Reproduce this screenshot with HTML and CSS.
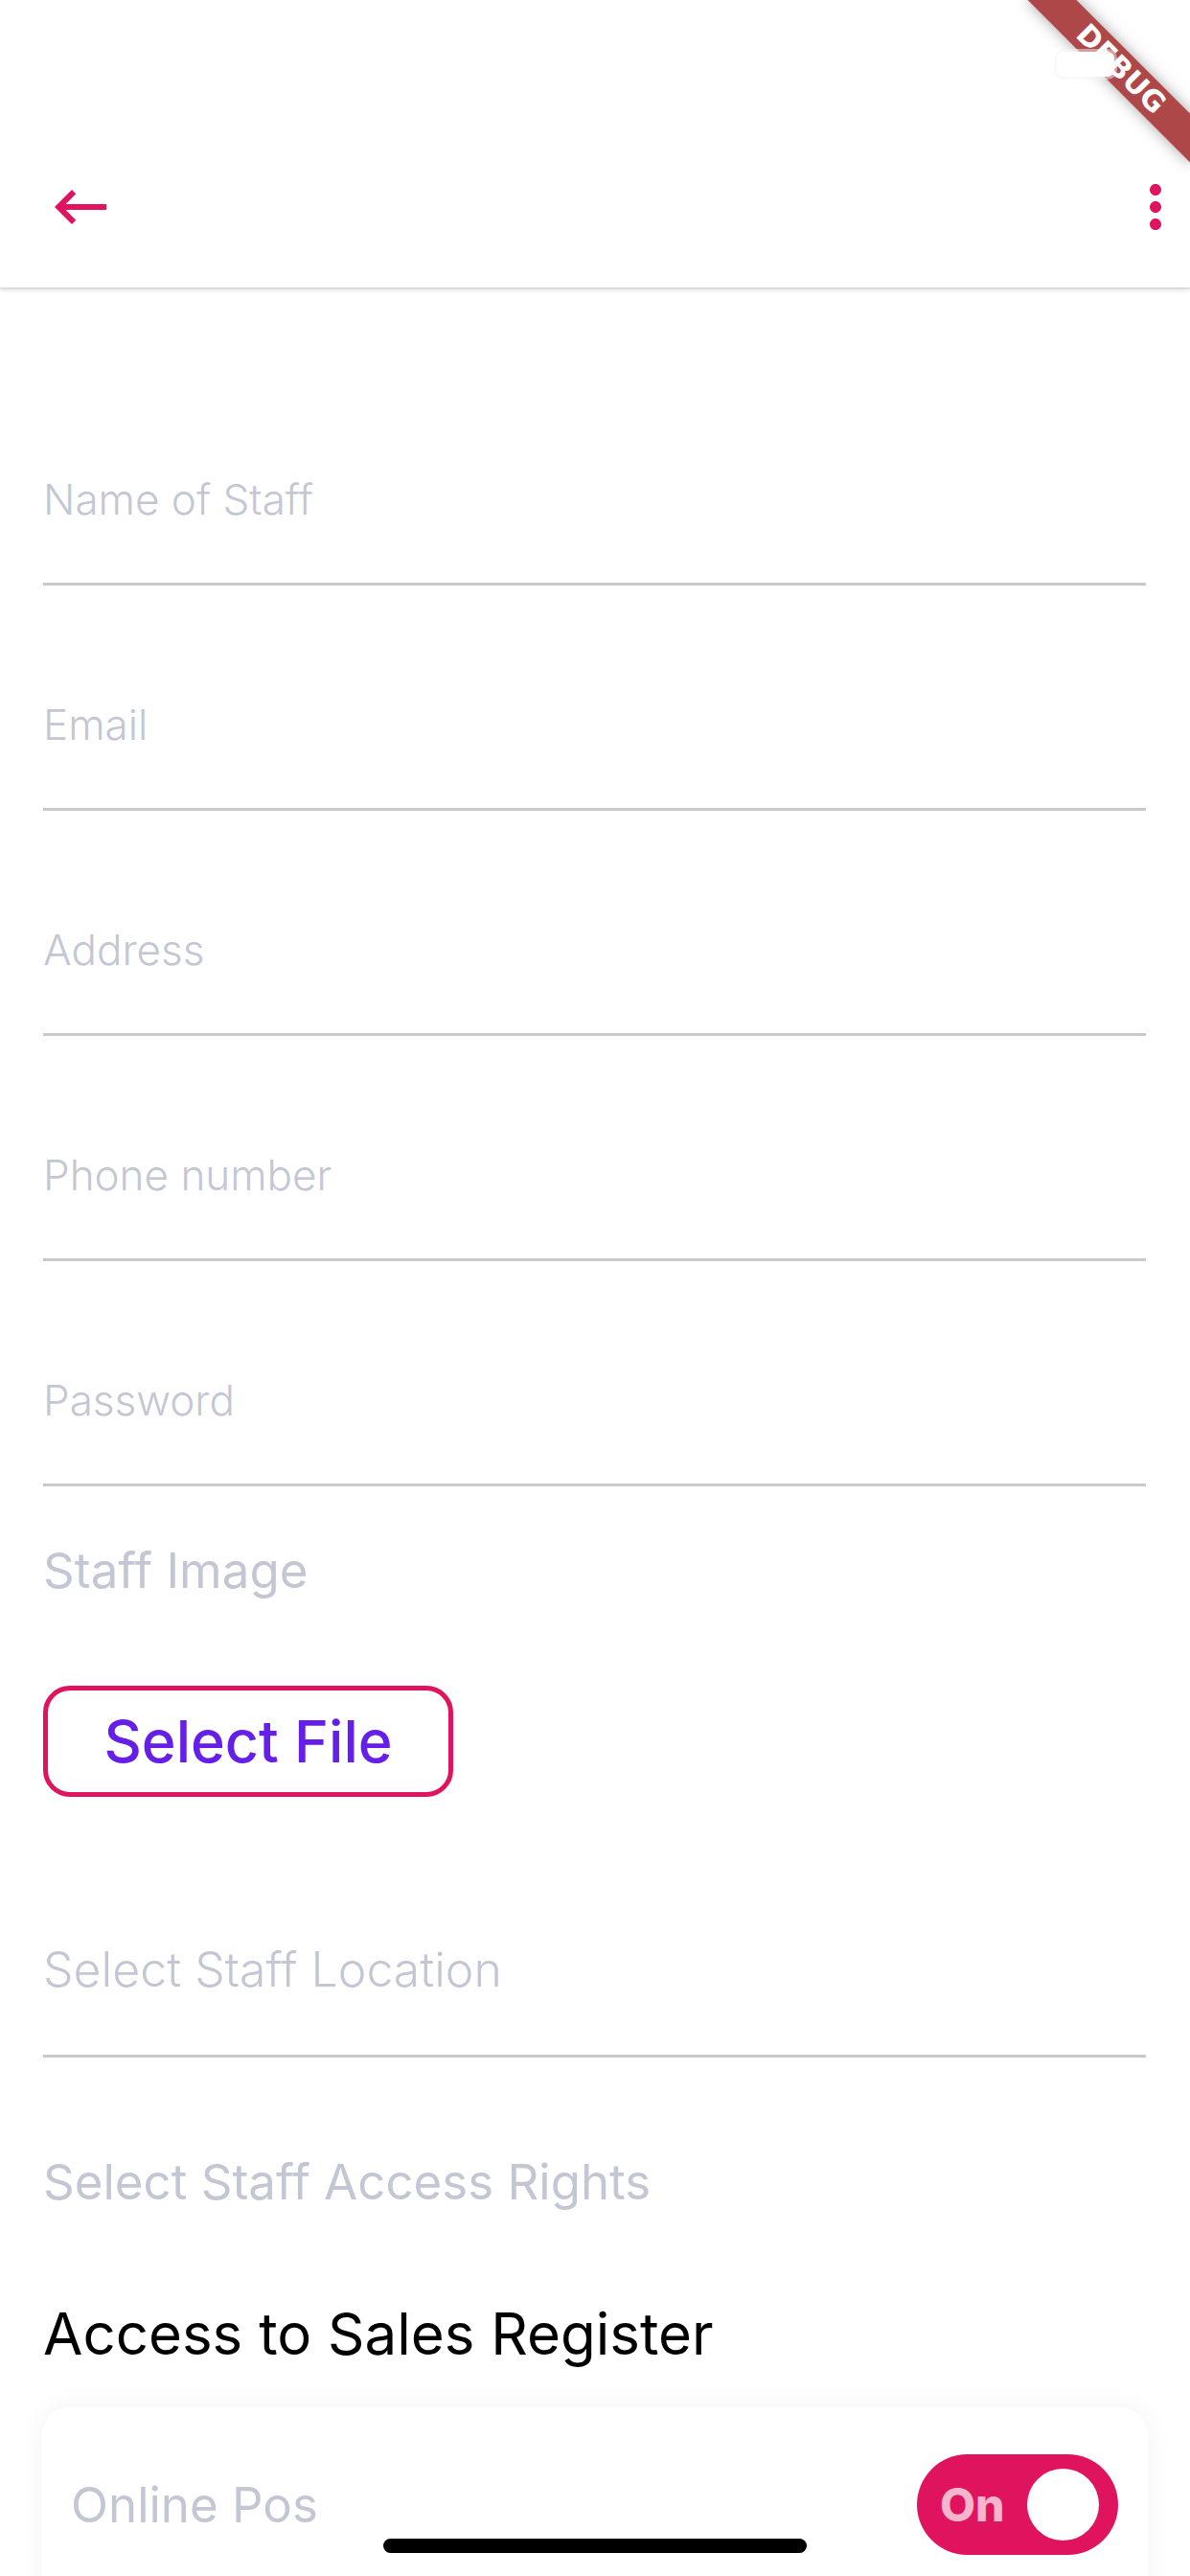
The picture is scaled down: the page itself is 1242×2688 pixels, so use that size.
FILE: index.html
```html
<!DOCTYPE html>
<html lang="en">
<head>
<meta charset="utf-8">
<title>Add Staff</title>
<link rel="stylesheet" href="styles.css">
</head>
<body>
<div class="screen">
  <header class="appbar">
    <div class="statusbar"></div>
    <div class="toolbar">
      <svg class="icon" viewBox="0 0 24 24"><path d="M21 11H6.83l3.58-3.59L9 6l-6 6 6 6 1.41-1.41L6.83 13H21z"/></svg>
      <svg class="icon" viewBox="0 0 24 24"><path d="M12 8c1.1 0 2-.9 2-2s-.9-2-2-2-2 .9-2 2 .9 2 2 2zm0 2c-1.1 0-2 .9-2 2s.9 2 2 2 2-.9 2-2-.9-2-2-2zm0 6c-1.1 0-2 .9-2 2s.9 2 2 2 2-.9 2-2-.9-2-2-2z"/></svg>
    </div>
  </header>

  <main class="form">
    <div class="field"><span class="hint">Name of Staff</span></div>
    <div class="field"><span class="hint">Email</span></div>
    <div class="field"><span class="hint">Address</span></div>
    <div class="field"><span class="hint">Phone number</span></div>
    <div class="field"><span class="hint">Password</span></div>

    <div class="label label-image">Staff Image</div>
    <button class="file-btn" type="button">Select File</button>

    <div class="field field-location"><span class="hint hint-large">Select Staff Location</span></div>

    <div class="label label-rights">Select Staff Access Rights</div>

    <h2 class="section-title">Access to Sales Register</h2>

    <div class="card">
      <div class="row">
        <span class="row-label">Online Pos</span>
        <div class="toggle"><span class="toggle-text">On</span><span class="knob"></span></div>
      </div>
    </div>
  </main>

  <div class="home-indicator"></div>
  <div class="debug-banner">DEBUG</div>
  <div class="battery"></div>
</div>
</body>
</html>
```

FILE: styles.css
```css
* { box-sizing: border-box; }

html, body {
  margin: 0;
  padding: 0;
  background: #ffffff;
}

body {
  font-family: "Inter", "Roboto", "Liberation Sans", sans-serif;
}

.screen {
  position: relative;
  width: 1242px;
  height: 2688px;
  overflow: hidden;
  background: #ffffff;
}

/* App bar */
.appbar {
  position: relative;
  z-index: 1;
  height: 300px;
  background: #ffffff;
  box-shadow: 0 2px 5px rgba(0, 0, 0, 0.18), 0 1px 1px rgba(0, 0, 0, 0.06);
}

.statusbar {
  height: 132px;
}

.toolbar {
  height: 168px;
  display: flex;
  align-items: center;
  justify-content: space-between;
  padding-left: 48px;
}

.icon {
  width: 72px;
  height: 72px;
  fill: #E0135F;
  display: block;
}

/* Form */
.form {
  padding: 76px 46px 0 45px;
}

.field {
  padding-top: 118px;
  padding-bottom: 60px;
  border-bottom: 3px solid #c9c9c9;
}

.hint {
  display: block;
  font-size: 44px;
  font-weight: 300;
  line-height: 54px;
  color: #c3c7d3;
}

.hint-large {
  font-size: 50px;
  line-height: 60px;
}

.label {
  font-size: 51px;
  font-weight: 400;
  line-height: 60px;
  color: #c3c7d3;
}

.label-image {
  margin-top: 58px;
}

.file-btn {
  margin-top: 90px;
  width: 428px;
  height: 116px;
  display: flex;
  align-items: center;
  justify-content: center;
  border: 5px solid #E0135F;
  border-radius: 28px;
  background: #ffffff;
  color: #651FE8;
  font-family: "Inter", "Roboto", "Liberation Sans", sans-serif;
  font-size: 61px;
  font-weight: 500;
  line-height: 1;
  padding: 0;
}

.field-location {
  padding-top: 150px;
  padding-bottom: 59px;
}

.label-rights {
  margin-top: 100px;
}

.section-title {
  margin: 92px 0 0;
  font-size: 60px;
  font-weight: 400;
  line-height: 72px;
  color: #000000;
}

.card {
  margin: 41px -2px 0;
  border-radius: 30px;
  background: #ffffff;
  box-shadow: 0 0 30px rgba(0, 0, 0, 0.05);
  padding: 49px 31px 200px;
}

.row {
  height: 105px;
  display: flex;
  align-items: center;
  justify-content: space-between;
}

.row-label {
  font-size: 51px;
  line-height: 60px;
  color: #c3c7d3;
}

.toggle {
  width: 210px;
  height: 105px;
  border-radius: 53px;
  background: #E0135F;
  display: flex;
  align-items: center;
  justify-content: space-between;
  padding: 0 20px 0 24px;
}

.toggle-text {
  font-size: 48px;
  font-weight: 800;
  line-height: 1;
  color: rgba(255, 255, 255, 0.7);
}

.knob {
  width: 75px;
  height: 75px;
  border-radius: 50%;
  background: #ffffff;
}

/* Overlays */
.home-indicator {
  position: absolute;
  left: 400px;
  top: 2649px;
  width: 442px;
  height: 15px;
  border-radius: 8px;
  background: #000000;
}

.debug-banner {
  position: absolute;
  z-index: 5;
  left: 1050px;
  top: 54px;
  width: 240px;
  height: 36px;
  transform: rotate(45deg);
  background: rgba(160, 40, 40, 0.85);
  box-shadow: 0 0 16px rgba(0, 0, 0, 0.35);
  color: #ffffff;
  font-family: "DejaVu Sans", "Liberation Sans", sans-serif;
  font-weight: 700;
  font-size: 30px;
  line-height: 36px;
  text-align: center;
}

.battery {
  position: absolute;
  z-index: 6;
  left: 1103px;
  top: 54px;
  width: 60px;
  height: 26px;
  border-radius: 7px;
  background: #ffffff;
  box-shadow: 0 0 0 3px rgba(245, 245, 245, 0.5);
}
```
